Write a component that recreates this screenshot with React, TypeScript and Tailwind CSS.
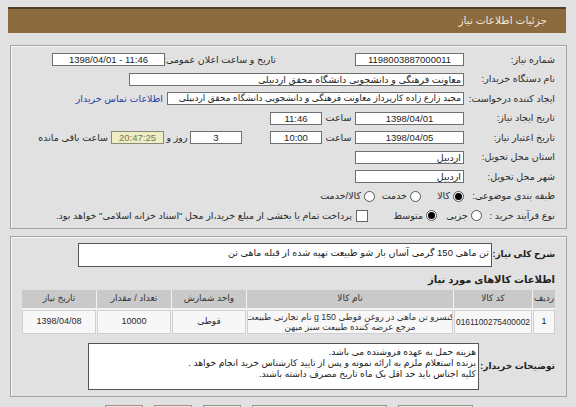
import React from "react";

function Input({ className, children, dir }: { className: string; children?: React.ReactNode; dir?: string }) {
  return (
    <div
      dir={dir}
      className={
        "h-[13px] shrink-0 bg-white border border-[#6f6f6f] leading-[11px] text-[#222] flex items-center overflow-hidden whitespace-nowrap " +
        className
      }
    >
      {children}
    </div>
  );
}

function Radio({ checked }: { checked?: boolean }) {
  return (
    <span className="w-[11px] h-[11px] shrink-0 rounded-full border border-[#555] bg-white flex items-center justify-center">
      {checked ? <span className="w-[7px] h-[7px] rounded-full bg-black" /> : null}
    </span>
  );
}

function Row({ children }: { children: React.ReactNode }) {
  return <div className="flex items-center h-[19.5px]">{children}</div>;
}

export default function App() {
  return (
    <div
      dir="rtl"
      className="w-[576px] h-[407px] overflow-hidden bg-[#e1e1e1] font-['Liberation_Sans','DejaVu_Sans',sans-serif] text-[9.5px] text-[#2b2b2b]"
    >
      <div className="pt-[7px]">
        <div className="ml-[8px] mr-[10px] h-[26px] bg-[#8b6a3e] border-t-2 border-[#4f3d25] pr-[19px] flex items-center text-[10.5px] text-[#efe6d6]">
          جزئیات اطلاعات نیاز
        </div>
      </div>

      {/* Frame 1 */}
      <div className="mt-[12px] ml-[10px] mr-[9px] h-[184px] border border-[#a3a3a3] shadow-[inset_1px_1px_0_#f7f7f7] pt-[4px] pr-[11px]">
        <Row>
          <span className="w-[91px] shrink-0">شماره نیاز:</span>
          <Input className="w-[109px] justify-center text-[9.5px]">1198003887000011</Input>
          <span className="w-[190px] shrink-0 pr-[79px] whitespace-nowrap">تاریخ و ساعت اعلان عمومی:</span>
          <Input dir="ltr" className="w-[113px] justify-center text-[9.5px]">1398/04/01 - 11:46</Input>
        </Row>
        <Row>
          <span className="w-[91px] shrink-0">نام دستگاه خریدار:</span>
          <Input className="w-[335px] pr-[2px] text-[9.5px]">معاونت فرهنگی و دانشجویی دانشگاه محقق اردبیلی</Input>
        </Row>
        <Row>
          <span className="w-[91px] shrink-0 whitespace-nowrap">ایجاد کننده درخواست:</span>
          <Input className="w-[297px] pr-[2px] text-[9px]">مجید زارع زاده کارپرداز معاونت فرهنگی و دانشجویی دانشگاه محقق اردبیلی</Input>
          <span className="mr-[4px] text-[#2a3fa6] whitespace-nowrap">اطلاعات تماس خریدار</span>
        </Row>
        <Row>
          <span className="w-[91px] shrink-0">تاریخ ایجاد نیاز:</span>
          <Input className="w-[109px] justify-center text-[9.5px]">1398/04/01</Input>
          <span className="w-[33px] shrink-0 text-center">ساعت</span>
          <Input className="w-[52px] justify-center text-[9.5px]">11:46</Input>
        </Row>
        <Row>
          <span className="w-[91px] shrink-0">تاریخ اعتبار نیاز:</span>
          <Input className="w-[109px] justify-center text-[9.5px]">1398/04/05</Input>
          <span className="w-[33px] shrink-0 text-center">ساعت</span>
          <Input className="w-[52px] justify-center text-[9.5px]">10:00</Input>
          <span className="w-[28px] shrink-0" />
          <Input className="w-[52px] justify-center text-[9.5px]">3</Input>
          <span className="w-[26px] shrink-0 text-center whitespace-nowrap">روز و</span>
          <Input className="w-[53px] justify-center text-[9.5px] !bg-[#eeedc3] !border-[#8a8a7a] !text-[#77775a]">20:47:25</Input>
          <span className="mr-[3px] whitespace-nowrap">ساعت باقی مانده</span>
        </Row>
        <Row>
          <span className="w-[91px] shrink-0">استان محل تحویل:</span>
          <Input className="w-[109px] pr-[2px] text-[9.5px]">اردبیل</Input>
        </Row>
        <Row>
          <span className="w-[91px] shrink-0">شهر محل تحویل:</span>
          <Input className="w-[109px] pr-[2px] text-[9.5px]">اردبیل</Input>
        </Row>
        <Row>
          <span className="w-[91px] shrink-0 whitespace-nowrap">طبقه بندی موضوعی:</span>
          <Radio checked />
          <span className="w-[32px] shrink-0 pr-[3px] whitespace-nowrap">کالا</span>
          <Radio />
          <span className="w-[35px] shrink-0 pr-[3px] whitespace-nowrap">خدمت</span>
          <Radio />
          <span className="pr-[3px] whitespace-nowrap">کالا/خدمت</span>
        </Row>
        <Row>
          <span className="w-[73px] shrink-0 whitespace-nowrap">نوع فرآیند خرید :</span>
          <Radio />
          <span className="w-[34px] shrink-0 pr-[3px] whitespace-nowrap">جزیی</span>
          <Radio checked />
          <span className="w-[58px] shrink-0 pr-[3px] whitespace-nowrap">متوسط</span>
          <span className="w-[12px] h-[12px] shrink-0 border border-[#666] bg-white" />
          <span className="mr-[4px] whitespace-nowrap">
            پرداخت تمام یا بخشی از مبلغ خرید،از محل "اسناد خزانه اسلامی" خواهد بود.
          </span>
        </Row>
      </div>

      {/* Frame 2 */}
      <div className="mt-[7px] ml-[10px] mr-[9px] h-[161px] border border-[#a3a3a3] shadow-[inset_1px_1px_0_#f7f7f7] pt-[6px]">
        <div className="flex items-center pr-[11px]">
          <span className="w-[63px] shrink-0 font-bold text-[9px] text-[#222] whitespace-nowrap">شرح کلی نیاز:</span>
          <div className="w-[414px] h-[24px] bg-white border border-[#555] pr-[2px] pt-[3px] text-[9.5px] leading-[12px] text-[#222] whitespace-nowrap overflow-hidden">
            تن ماهی 150 گرمی آسان باز شو طبیعت تهیه شده از قبله ماهی تن
          </div>
        </div>
        <div className="mt-[7px] h-[12px] leading-[12px] pr-[11px] font-bold text-[10px] text-[#222]">
          اطلاعات کالاهای مورد نیاز
        </div>
        <div className="mt-[4px] mr-[11px] ml-[11px] grid grid-cols-[22px_78px_206px_74px_74px_74px] gap-x-[1px] gap-y-[2px] bg-[#f2f2f2] text-[9px]">
          {["ردیف", "کد کالا", "نام کالا", "واحد شمارش", "تعداد / مقدار", "تاریخ نیاز"].map((h) => (
            <div key={h} className="h-[18px] bg-[#c9c9c9] flex items-center justify-center text-[#333] whitespace-nowrap">
              {h}
            </div>
          ))}
          <div className="h-[24px] bg-[#f7f7f7] border border-[#d0d0d0] flex items-center justify-center">1</div>
          <div className="h-[24px] bg-[#f7f7f7] border border-[#d0d0d0] flex items-center justify-center text-[8.4px]">0161100275400002</div>
          <div className="h-[24px] bg-[#f7f7f7] border border-[#d0d0d0] flex flex-col items-center justify-center leading-[10px] text-[8.8px] text-[#333] overflow-hidden">
            <span className="whitespace-nowrap">کنسرو تن ماهی در روغن قوطی 150 g نام تجارتی طبیعت</span>
            <span className="whitespace-nowrap">مرجع عرضه کننده طبیعت سبز میهن</span>
          </div>
          <div className="h-[24px] bg-[#f7f7f7] border border-[#d0d0d0] flex items-center justify-center">قوطی</div>
          <div className="h-[24px] bg-[#f7f7f7] border border-[#d0d0d0] flex items-center justify-center">10000</div>
          <div className="h-[24px] bg-[#f7f7f7] border border-[#d0d0d0] flex items-center justify-center">1398/04/08</div>
        </div>
        <div className="mt-[9px] flex items-center pr-[11px]">
          <span className="w-[76px] shrink-0 font-bold text-[9px] text-[#222] whitespace-nowrap">توضیحات خریدار:</span>
          <div className="w-[391px] h-[47px] bg-white border border-[#555] pr-[2px] pt-[3px] text-[9.2px] leading-[11px] text-[#222] whitespace-nowrap overflow-hidden">
            <div>هزینه حمل به عهده فروشنده می باشد.</div>
            <div>برنده استعلام ملزم به ارائه نمونه و پس از تایید کارشناس خرید انجام خواهد .</div>
            <div> کلیه اجناس باید حد اقل یک ماه تاریخ مصرف داشته باشند.</div>
          </div>
        </div>
      </div>

      {/* Buttons */}
      <div className="mt-[8px] flex pr-[103px] gap-[11px]">
        <div className="w-[75px] h-[22px] border border-[#8e978e] bg-[#e9e9e9]" />
        <div className="w-[135px] h-[22px] border border-[#8e978e] bg-[#e9e9e9]" />
        <div className="w-[38px] h-[22px] border border-[#8e978e] bg-[#e9e9e9]" />
        <div className="w-[38px] h-[22px] border border-[#b08e8e] bg-[#ece4e4]" />
        <div className="w-[38px] h-[22px] border border-[#b08e8e] bg-[#ece4e4]" />
      </div>
    </div>
  );
}
